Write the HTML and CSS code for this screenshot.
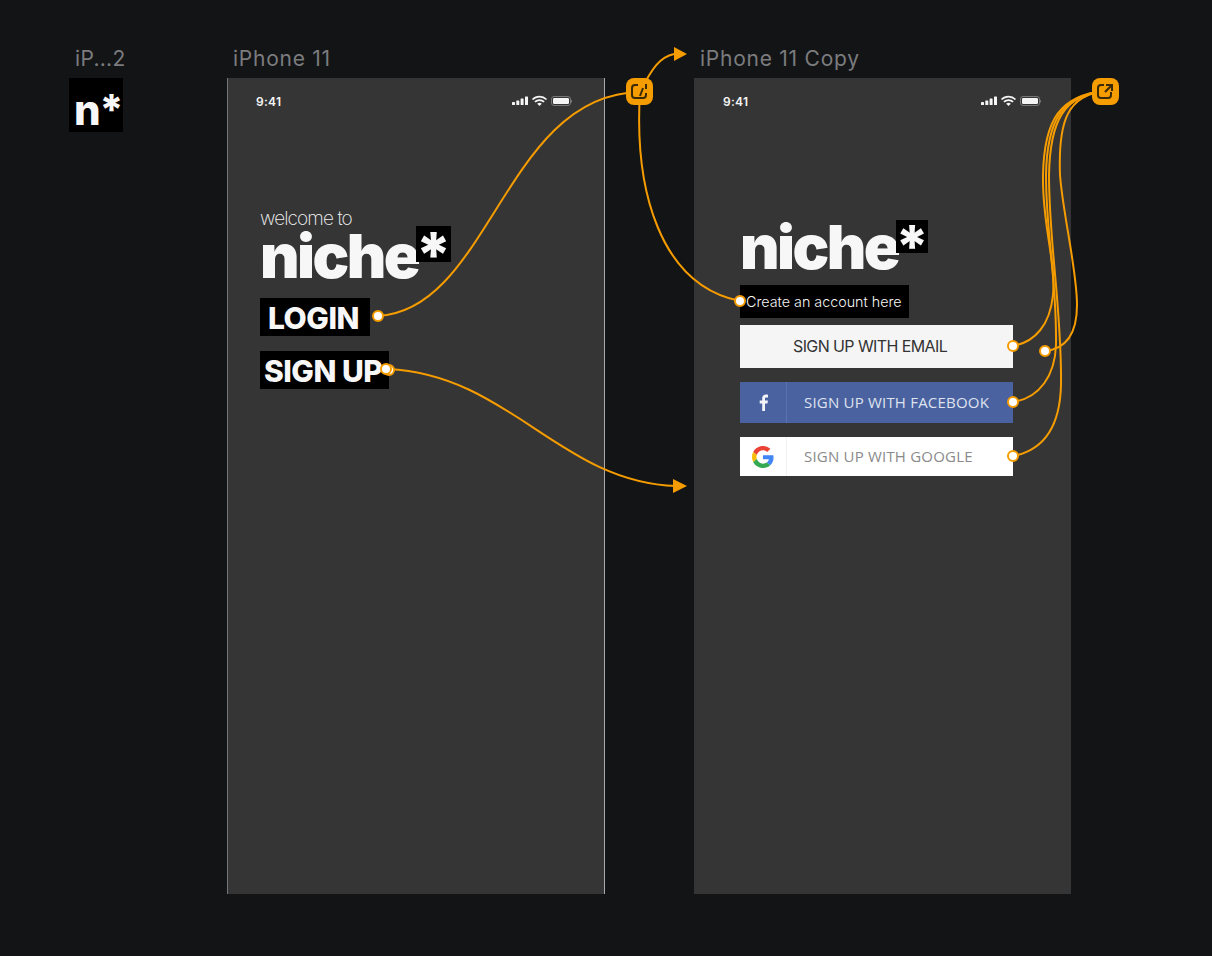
FILE: index.html
```html
<!DOCTYPE html>
<html lang="en">
<head>
  <meta charset="UTF-8">
  <title>niche* prototype</title>
  <link rel="stylesheet" href="styles.css">
</head>
<body>
  <div class="canvas">
    <!-- App icon artboard -->
    <div class="frame-label label-icon">iP...2</div>
    <div class="app-icon">n*</div>

    <!-- Welcome screen -->
    <div class="frame-label label-one">iPhone 11</div>
    <div class="phone phone-one">
      <div class="status-bar">
        <span class="time">9:41</span>
        <svg class="status-icons" width="60" height="12" viewBox="0 0 60 12">
          <rect x="0" y="7" width="3" height="3" rx=".6" fill="#f5f5f5"/>
          <rect x="4.300" y="5.500" width="3" height="4.500" rx=".6" fill="#f5f5f5"/>
          <rect x="8.600" y="3.500" width="3" height="6.500" rx=".6" fill="#f5f5f5"/>
          <rect x="13" y="1.500" width="3" height="8.500" rx=".6" fill="#f5f5f5"/>
          <path d="M20.500 4.500a10 10 0 0 1 14 0M22.900 6.900a6.600 6.600 0 0 1 9.200 0" fill="none" stroke="#f5f5f5" stroke-width="1.700"/>
          <path d="M25.200 8.800a3.300 3.300 0 0 1 4.600 0L27.500 11z" fill="#f5f5f5"/>
          <rect x="39.500" y="1.500" width="19" height="9" rx="2.500" fill="none" stroke="#777"/>
          <rect x="41" y="3" width="16" height="6" rx="1.300" fill="#f5f5f5"/>
          <rect x="59" y="4.800" width="1" height="2.800" rx=".5" fill="#777"/>
        </svg>
      </div>
      <div class="content content-one">
        <div class="welcome">welcome to</div>
        <div class="logo">
          <span class="logo-word">niche</span><span class="logo-star"><b>*</b></span>
        </div>
        <div class="action login">LOGIN</div>
        <div class="action signup">SIGN UP</div>
      </div>
    </div>

    <!-- Sign up screen -->
    <div class="frame-label label-two">iPhone 11 Copy</div>
    <div class="phone phone-two">
      <div class="status-bar">
        <span class="time">9:41</span>
        <svg class="status-icons" width="60" height="12" viewBox="0 0 60 12">
          <rect x="0" y="7" width="3" height="3" rx=".6" fill="#f5f5f5"/>
          <rect x="4.300" y="5.500" width="3" height="4.500" rx=".6" fill="#f5f5f5"/>
          <rect x="8.600" y="3.500" width="3" height="6.500" rx=".6" fill="#f5f5f5"/>
          <rect x="13" y="1.500" width="3" height="8.500" rx=".6" fill="#f5f5f5"/>
          <path d="M20.500 4.500a10 10 0 0 1 14 0M22.900 6.900a6.600 6.600 0 0 1 9.200 0" fill="none" stroke="#f5f5f5" stroke-width="1.700"/>
          <path d="M25.200 8.800a3.300 3.300 0 0 1 4.600 0L27.500 11z" fill="#f5f5f5"/>
          <rect x="39.500" y="1.500" width="19" height="9" rx="2.500" fill="none" stroke="#777"/>
          <rect x="41" y="3" width="16" height="6" rx="1.300" fill="#f5f5f5"/>
          <rect x="59" y="4.800" width="1" height="2.800" rx=".5" fill="#777"/>
        </svg>
      </div>
      <div class="content content-two">
        <div class="logo">
          <span class="logo-word">niche</span><span class="logo-star small"><b>*</b></span>
        </div>
        <div class="create">Create an account here</div>
        <div class="btn btn-email">SIGN UP WITH EMAIL</div>
        <div class="btn btn-social btn-facebook">
          <span class="btn-icon">
            <svg width="11" height="17" viewBox="0 0 11 17"><path d="M7 17V9.500h2.500l.4-2.900H7V4.800c0-.9.300-1.400 1.500-1.400H10V.8C9.700.7 8.900.6 8 .6 5.800.6 4.200 2 4.200 4.500v2.100H1.700v2.900h2.500V17z" fill="#f2f4f8"/></svg>
          </span>
          <span class="btn-text">SIGN UP WITH FACEBOOK</span>
        </div>
        <div class="btn btn-social btn-google">
          <span class="btn-icon">
            <svg width="22" height="22" viewBox="0 0 48 48">
              <path fill="#ea4335" d="M24 9.500c3.500 0 6.700 1.200 9.200 3.600l6.900-6.900C35.900 2.400 30.500 0 24 0 14.600 0 6.500 5.400 2.600 13.200l8 6.200C12.500 13.700 17.800 9.500 24 9.500z"/>
              <path fill="#4285f4" d="M47 24.500c0-1.600-.1-3.100-.4-4.500H24v9h12.900c-.6 3-2.200 5.500-4.700 7.200l7.700 6c4.500-4.200 7.100-10.300 7.100-17.700z"/>
              <path fill="#fbbc05" d="M10.500 28.600c-.5-1.500-.8-3-.8-4.600s.3-3.100.8-4.600l-8-6.200C.9 16.500 0 20.100 0 24s.9 7.500 2.600 10.800z"/>
              <path fill="#34a853" d="M24 48c6.500 0 11.900-2.100 15.900-5.800l-7.700-6c-2.200 1.400-4.900 2.300-8.200 2.300-6.200 0-11.500-4.200-13.400-9.900l-8 6.200C6.500 42.600 14.600 48 24 48z"/>
            </svg>
          </span>
          <span class="btn-text">SIGN UP WITH GOOGLE</span>
        </div>
      </div>
    </div>

    <!-- Prototype links drawn over the artboards -->
    <svg class="wires" width="1212" height="956" viewBox="0 0 1212 956">
      <g fill="none" stroke="#f59c00" stroke-width="2">
        <path d="M378 316C490 310 505 94 640 92"/>
        <path d="M640 92C652 68 660 57 674 54"/>
        <path d="M640 92C634 190 660 285 740 301"/>
        <path d="M388 369C510 375 560 482 676 486"/>
        <path d="M1105 91C1060 95 1044 120 1043 175C1042 225 1056 260 1053 295C1050 325 1035 342 1013 346"/>
        <path d="M1105 91C1062 95 1047 120 1046 175C1046 235 1057 280 1056 345C1055 375 1040 398 1013 402"/>
        <path d="M1105 91C1064 95 1050 120 1049 175C1049 245 1062 310 1061 385C1060 425 1045 450 1013 456"/>
        <path d="M1105 91C1068 95 1058 120 1060 175C1063 215 1077 270 1077 305C1077 335 1065 349 1045 351"/>
      </g>
      <path d="M674 47L687 54L674 61z" fill="#f59c00"/>
      <path d="M673 479L687 486L673 493z" fill="#f59c00"/>

      <g fill="#fff" stroke="#f59c00" stroke-width="2">
        <circle cx="389" cy="370" r="5"/>
        <circle cx="386" cy="369" r="5"/>
        <circle cx="378" cy="316" r="5"/>
        <circle cx="740" cy="301" r="5"/>
        <circle cx="1013" cy="346" r="5"/>
        <circle cx="1045" cy="351" r="5"/>
        <circle cx="1013" cy="402" r="5"/>
        <circle cx="1013" cy="456" r="5"/>
      </g>

      <g>
        <rect x="626" y="78" width="27" height="27" rx="8" fill="#f59c00"/>
        <path d="M638 85h-3a3 3 0 0 0-3 3v7a3 3 0 0 0 3 3h8a3 3 0 0 0 3-3v-2" fill="none" stroke="#3b2a08" stroke-width="2"/>
        <path d="M646 84v5M640 96l3-8" fill="none" stroke="#3b2a08" stroke-width="2"/>
        <rect x="1092" y="78" width="27" height="27" rx="8" fill="#f59c00"/>
        <path d="M1104 85h-3a3 3 0 0 0-3 3v7a3 3 0 0 0 3 3h7a3 3 0 0 0 3-3v-3" fill="none" stroke="#3b2a08" stroke-width="2"/>
        <path d="M1105 92l6-6M1106 85h6v6" fill="none" stroke="#3b2a08" stroke-width="2"/>
      </g>
    </svg>
  </div>
</body>
</html>
```

FILE: styles.css
```css
html, body {
  margin: 0;
  padding: 0;
  background: #131416;
}
.canvas {
  position: relative;
  width: 1212px;
  height: 956px;
  overflow: hidden;
  background: #131416;
  font-family: Inter, "Liberation Sans", sans-serif;
}

/* artboard names */
.frame-label {
  position: absolute;
  top: 46px;
  font-size: 21px;
  line-height: 25px;
  letter-spacing: 0.75px;
  color: #7b7c7e;
}
.label-icon { left: 75px; letter-spacing: 0.3px; }
.label-one { left: 233px; }
.label-two { left: 700px; }

.app-icon {
  position: absolute;
  left: 69px;
  top: 78px;
  width: 54px;
  height: 54px;
  box-sizing: border-box;
  padding: 8px 0 0 5px;
  background: #000;
  color: #f7f7f7;
  font-size: 42px;
  font-weight: 800;
  line-height: 48px;
  letter-spacing: -1.5px;
  white-space: nowrap;
}

/* phones */
.phone {
  position: absolute;
  top: 78px;
  height: 816px;
  background: #353535;
  box-sizing: border-box;
}
.phone-one {
  left: 227px;
  width: 378px;
  border-left: 1px solid #777;
  border-right: 1px solid #aaa;
}
.phone-two {
  left: 694px;
  width: 377px;
}

.status-bar {
  display: flex;
  justify-content: space-between;
  align-items: center;
  height: 14px;
  padding: 16px 32px 0 28px;
  color: #f5f5f5;
}
.phone-two .status-bar {
  padding: 16px 30px 0 29px;
}
.time {
  font-size: 12px;
  font-weight: 600;
  letter-spacing: 0.3px;
}
.status-icons {
  display: block;
}

.content-one {
  padding: 99px 0 0 32px;
}
.content-two {
  padding: 110px 0 0 46px;
}

.welcome {
  font-size: 19px;
  font-weight: 200;
  line-height: 23px;
  letter-spacing: -0.9px;
  color: #f5f5f5;
}

.logo {
  display: flex;
  height: 58px;
  color: #f7f7f7;
}
.logo-word {
  font-size: 61px;
  font-weight: 900;
  line-height: 58px;
  letter-spacing: -2.6px;
}
.content-one .logo-word {
  line-height: 52px;
}
.logo-star {
  width: 35px;
  height: 36px;
  margin-left: -2px;
  margin-top: -4px;
  background: #000;
  display: flex;
  justify-content: center;
}
.logo-star b {
  font-size: 62px;
  font-weight: 800;
  line-height: 36px;
  transform: translateY(11px);
}
.logo-star.small {
  width: 32px;
  height: 33px;
  margin-top: 2px;
}
.logo-star.small b {
  font-size: 58px;
  line-height: 33px;
  transform: translateY(10px);
}

.action {
  background: #000;
  color: #f7f7f7;
  box-sizing: border-box;
  height: 38px;
  line-height: 41px;
  font-size: 30px;
  font-weight: 800;
  letter-spacing: -0.5px;
  white-space: nowrap;
}
.login {
  width: 110px;
  margin-top: 10px;
  padding-left: 8px;
}
.signup {
  width: 129px;
  margin-top: 15px;
  padding-left: 4px;
}

.create {
  width: 169px;
  height: 33px;
  margin-top: 9px;
  padding-left: 6px;
  box-sizing: border-box;
  background: #000;
  color: #f5f5f5;
  font-size: 14.3px;
  font-weight: 300;
  line-height: 33px;
  white-space: nowrap;
}

.btn {
  width: 273px;
  box-sizing: border-box;
}
.btn-email {
  height: 43px;
  margin-top: 7px;
  padding-left: 53px;
  background: #f5f5f5;
  color: #333;
  font-size: 16px;
  line-height: 43px;
  letter-spacing: -0.6px;
  white-space: nowrap;
}
.btn-social {
  display: flex;
  align-items: center;
  font-family: "Open Sans", sans-serif;
  font-size: 15px;
  letter-spacing: 0.2px;
  white-space: nowrap;
}
.btn-icon {
  width: 47px;
  height: 100%;
  display: flex;
  align-items: center;
  justify-content: center;
  box-sizing: border-box;
  border-right: 1px solid #5a72ae;
}
.btn-text {
  padding: 0 0 2px 17px;
}
.btn-facebook {
  height: 41px;
  margin-top: 14px;
  background: #4a62a0;
  color: #dfe3ef;
}
.btn-google {
  height: 39px;
  margin-top: 14px;
  background: #fff;
  color: #8a8a8a;
}
.btn-google .btn-icon {
  border-right-color: #f2f2f2;
}

.wires {
  position: absolute;
  left: 0;
  top: 0;
  pointer-events: none;
}
```
